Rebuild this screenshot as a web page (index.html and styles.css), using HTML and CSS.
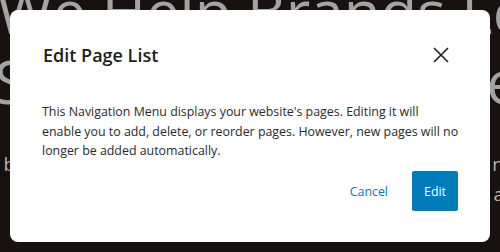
FILE: index.html
```html
<!DOCTYPE html>
<html lang="en">
  <head>
    <meta charset="UTF-8" />
    <meta name="viewport" content="width=device-width, initial-scale=1.0" />
    <title>Edit Page List</title>
    <link rel="stylesheet" href="styles.css">
  </head>
  <body>
    <div class="page">
      <h1 class="hero">We Help Brands Look</h1>
      <h1 class="hero hero-two"><span>S</span><span>e</span></h1>
      <p class="lead"><span>e b</span><span>n</span></p>
      <p class="lead"><span></span><span>a</span></p>
    </div>

    <div class="overlay">
      <div class="modal" role="dialog">
        <div class="modal-header">
          <h2 class="modal-title">Edit Page List</h2>
          <button class="close" aria-label="Close">
            <svg width="24" height="24" viewBox="0 0 24 24">
              <path d="M5 5 L19 19 M19 5 L5 19" stroke="#1e1e1e" stroke-width="1.6" fill="none" />
            </svg>
          </button>
        </div>
        <p class="modal-text">
          This Navigation Menu displays your website's pages. Editing it will<br>
          enable you to add, delete, or reorder pages. However, new pages will no<br>
          longer be added automatically.
        </p>
        <div class="modal-actions">
          <button class="btn btn-link">Cancel</button>
          <button class="btn btn-primary">Edit</button>
        </div>
      </div>
    </div>
  </body>
</html>
```

FILE: styles.css
```css
* {
  margin: 0;
  padding: 0;
  box-sizing: border-box;
}
body {
  width: 500px;
  height: 252px;
  overflow: hidden;
  background-color: #17120f;
  font-family: "Open Sans", "Noto Sans", sans-serif;
}
.page {
  height: 252px;
  overflow: hidden;
  color: #a3a3a3;
}
.hero {
  font-size: 60px;
  font-weight: 500;
  line-height: 70px;
  margin-top: -24px;
  margin-left: -3px;
  white-space: nowrap;
}
.hero-two {
  display: flex;
  justify-content: space-between;
  margin-top: 0;
  margin-left: -6px;
  margin-right: -20px;
}
.lead {
  display: flex;
  justify-content: space-between;
  font-size: 19px;
  line-height: 30px;
  margin-left: -12px;
  margin-right: -4px;
  color: #b4b4b4;
}
.hero-two + .lead {
  margin-top: 33px;
}
.overlay {
  position: fixed;
  inset: 0;
  padding: 10px;
  display: flex;
}
.modal {
  width: 480px;
  height: 232px;
  background-color: #fff;
  border-radius: 8px;
  padding: 32px 32px 31px 32px;
  display: flex;
  flex-direction: column;
}
.modal-header {
  display: flex;
  align-items: center;
  justify-content: space-between;
  height: 26px;
}
.modal-title {
  font-size: 18px;
  font-weight: 600;
  color: #1e1e1e;
  margin-left: 1px;
}
.close {
  width: 24px;
  height: 24px;
  margin-right: 5px;
  border: none;
  background: none;
  display: flex;
}
.modal-text {
  margin-top: 34px;
  margin-right: -10px;
  font-size: 12.4px;
  line-height: 19.5px;
  white-space: nowrap;
  color: #2a2a2a;
}
.modal-actions {
  margin-top: auto;
  display: flex;
  justify-content: flex-end;
  gap: 12px;
}
.btn {
  height: 40px;
  border: none;
  border-radius: 2px;
  font-family: inherit;
  font-size: 12.4px;
  padding: 0 12px;
}
.btn-link {
  background: none;
  color: #007cba;
}
.btn-primary {
  background-color: #007cba;
  color: #fff;
  font-weight: 500;
  width: 46px;
}
```
